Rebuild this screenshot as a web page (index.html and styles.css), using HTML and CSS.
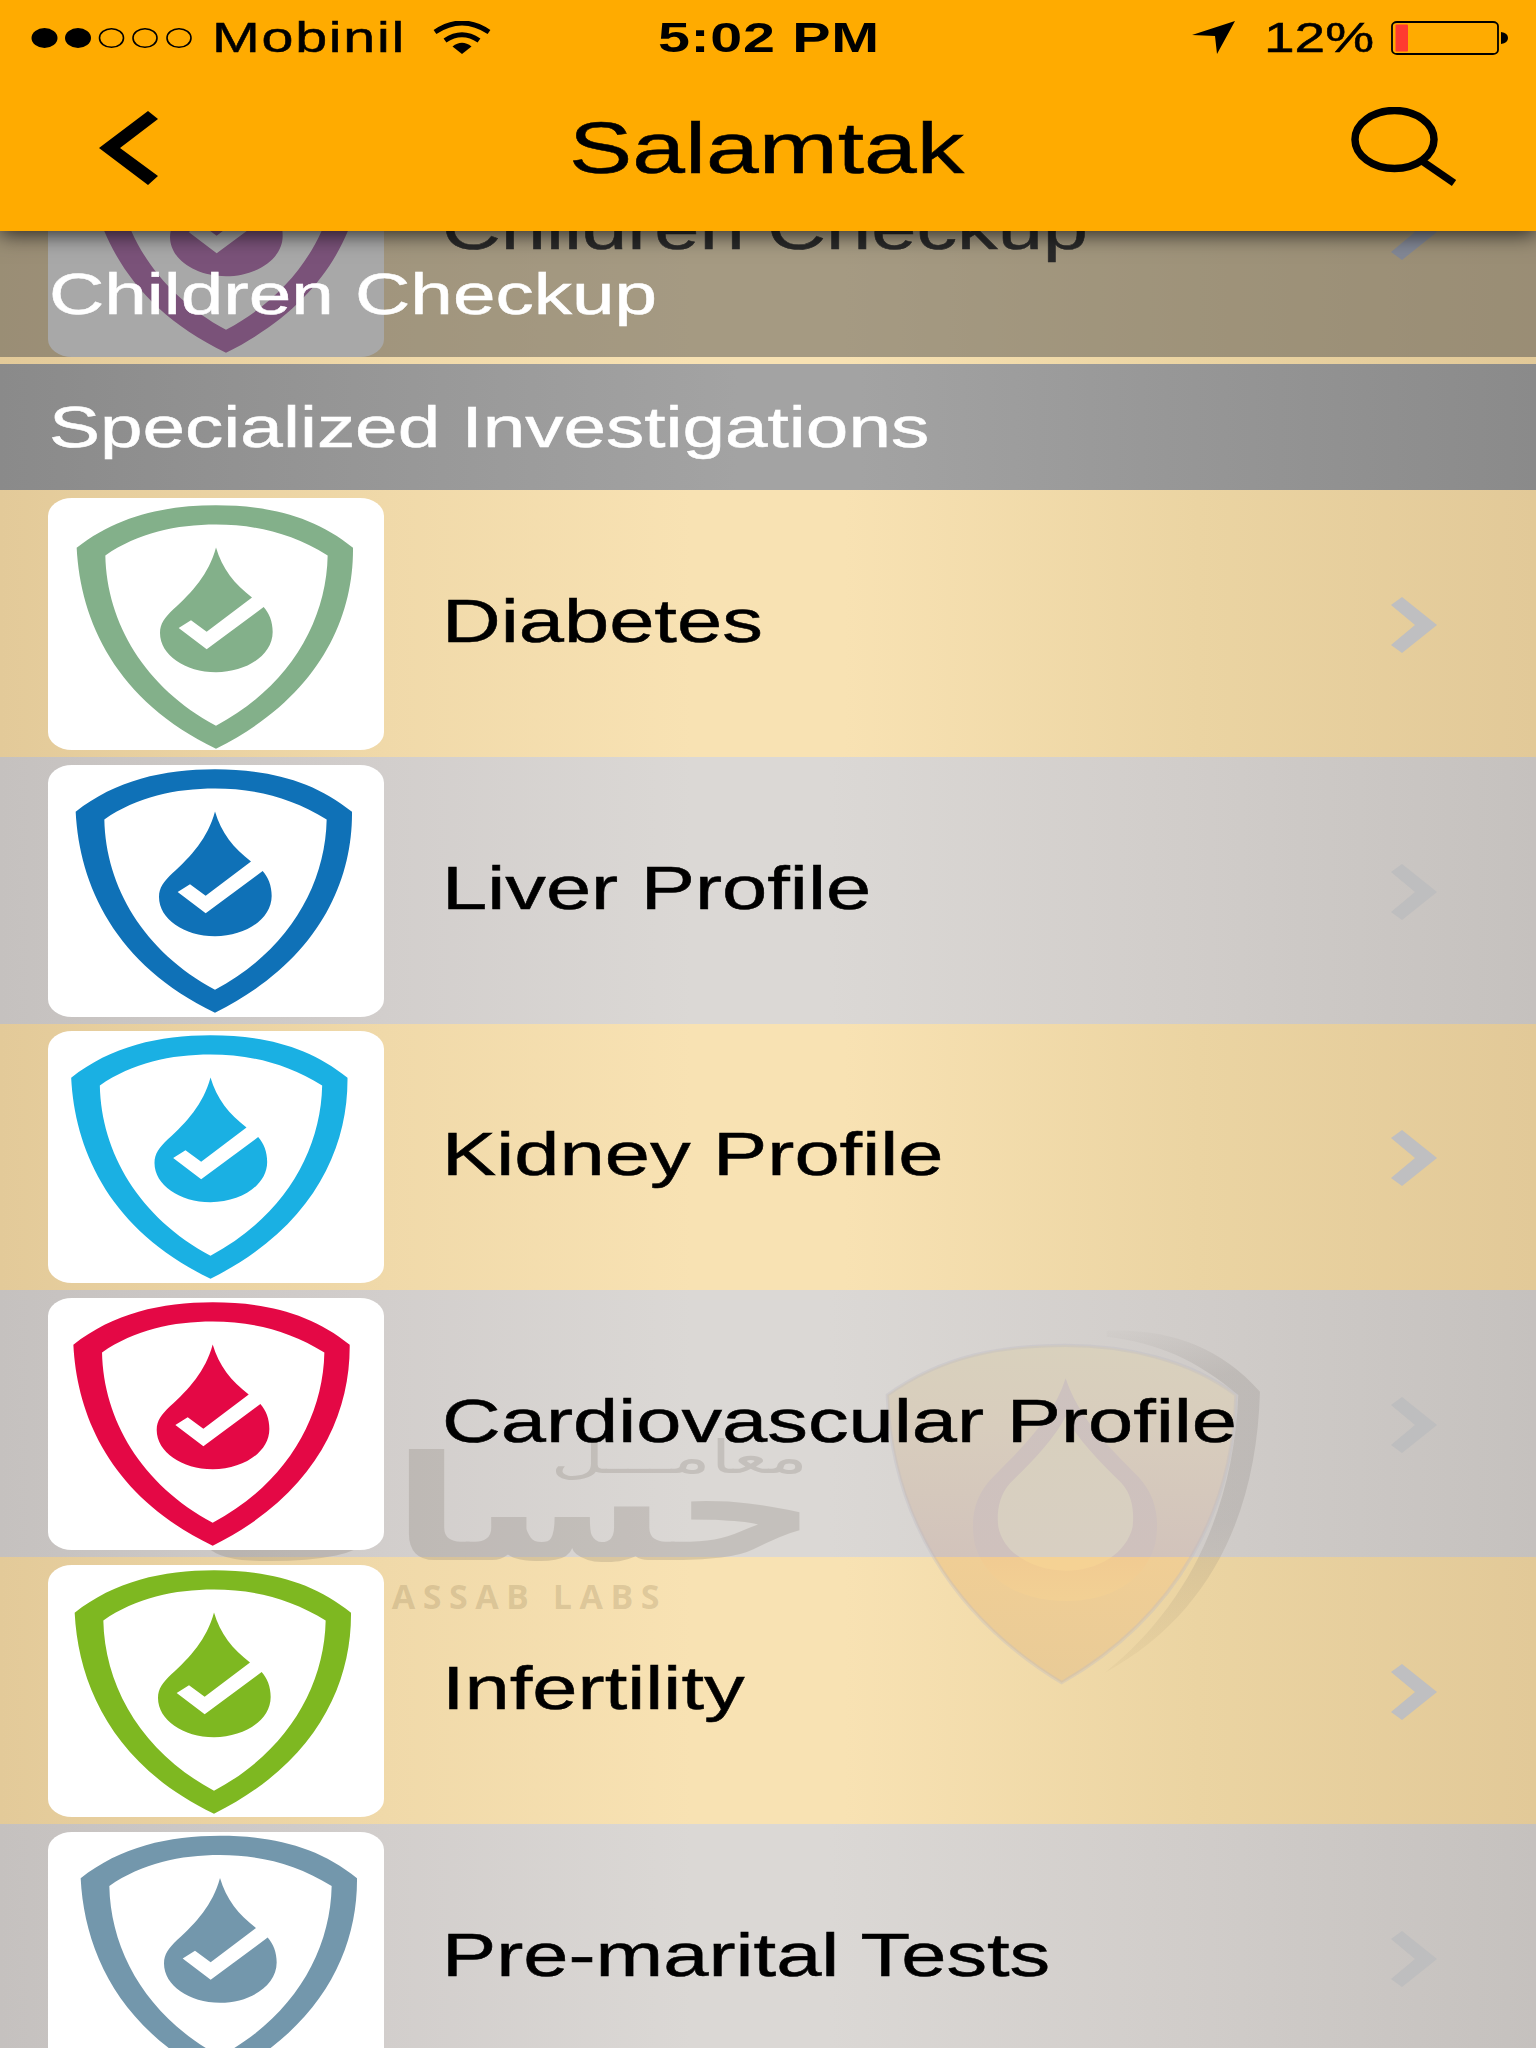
FILE: index.html
```
<!DOCTYPE html>
<html lang="en">
<head>
    <meta charset="UTF-8">
    <meta name="viewport" content="width=device-width, initial-scale=1.0">
    <title>Salamtak</title>
    <link rel="stylesheet" href="styles.css">
</head>
<body>

    <!-- shared icons -->
    <svg class="defs" width="0" height="0">
        <symbol id="shield" viewBox="0 0 1008 758" preserveAspectRatio="none">
            <path fill-rule="evenodd" d="M86 150 C205 55 350 22 504 22 C660 22 800 55 915 150 C917 370 805 605 504 754 C203 610 97 370 86 150 Z M172 173 C176 375 290 570 504 685 C720 570 835 375 839 173 C730 105 620 80 504 80 C385 80 270 105 172 173 Z"/>
            <path d="M504 149 C482 230 432 284 376 335 C350 360 336 378 336 406 C336 472 411 524 504 524 C596 524 674 472 674 403 C674 372 664 348 647 328 L476 455 L392 391 L429 368 L476 402 L612 299 C560 260 522 212 504 149 Z"/>
        </symbol>
        <symbol id="chevron" viewBox="0 0 46 56">
            <path d="M0 8 L11 0 L46 28 L11 56 L0 48 L24 28 Z"/>
        </symbol>
    </svg>

    <header class="topbar">
        <div class="status">
            <div class="status-left">
                <svg class="signal" width="162" height="22" viewBox="0 0 162 22">
                    <ellipse cx="13.5" cy="11" rx="13" ry="10"/>
                    <ellipse cx="47" cy="11" rx="13" ry="10"/>
                    <ellipse class="empty" cx="80.500" cy="11" rx="12" ry="9.300"/>
                    <ellipse class="empty" cx="114" cy="11" rx="12" ry="9.300"/>
                    <ellipse class="empty" cx="148" cy="11" rx="12" ry="9.300"/>
                </svg>
                <span class="carrier"><span class="wide">Mobinil</span></span>
                <svg class="wifi" width="58" height="34" viewBox="0 0 58 34">
                    <path class="arc" d="M2 11 Q29 -7 56 11"/>
                    <path class="arc" d="M12 19.500 Q29 8 46 19.500"/>
                    <path d="M19.500 25.500 Q29 18 38.500 25.500 L29 33 Z"/>
                </svg>
            </div>
            <div class="clock"><span class="wide">5:02 PM</span></div>
            <div class="status-right">
                <svg width="43" height="33" viewBox="0 0 43 33"><path d="M43 0 L25 33 L23 15 L0 14 Z"/></svg>
                <span class="percent"><span class="wide">12%</span></span>
                <svg class="battery" width="118" height="34" viewBox="0 0 118 34">
                    <rect class="case" x="1" y="1" width="106" height="32" rx="5" ry="4"/>
                    <rect class="level" x="4.500" y="3.500" width="12.500" height="27" rx="1"/>
                    <path d="M110 11 Q117 12 117 17 Q117 22 110 23 Z"/>
                </svg>
            </div>
        </div>
        <div class="navbar">
            <svg class="back" width="59" height="74" viewBox="0 0 59 74"><path d="M49 0 L59 8 L21 37 L59 65 L49 74 L0 37 Z"/></svg>
            <h1><span class="wide">Salamtak</span></h1>
            <svg class="search" width="106" height="80" viewBox="0 0 106 80">
                <ellipse cx="43.500" cy="32.500" rx="39.500" ry="29"/>
                <path d="M71 54 L103 76"/>
            </svg>
        </div>
    </header>

    <main class="list">
        <svg class="watermark" viewBox="0 231 1536 1817">
            <defs>
                <linearGradient id="gold" gradientUnits="userSpaceOnUse" x1="0" y1="130" x2="0" y2="1148">
                    <stop offset="0" stop-color="#d9d1bd"/>
                    <stop offset="0.250" stop-color="#d8cdbd"/>
                    <stop offset="0.629" stop-color="#d2c3bb"/>
                    <stop offset="0.630" stop-color="#f0ce95"/>
                    <stop offset="1" stop-color="#e9cb97"/>
                </linearGradient>
                <linearGradient id="inner" gradientUnits="userSpaceOnUse" x1="0" y1="300" x2="0" y2="820">
                    <stop offset="0" stop-color="#d8d0bd"/>
                    <stop offset="0.904" stop-color="#d8cfc2"/>
                    <stop offset="0.905" stop-color="#f5d294"/>
                </linearGradient>
                <linearGradient id="ring" gradientUnits="userSpaceOnUse" x1="0" y1="235" x2="0" y2="900">
                    <stop offset="0" stop-color="#cdc2bf"/>
                    <stop offset="0.805" stop-color="#cfc1bd"/>
                    <stop offset="0.806" stop-color="#f1cb92"/>
                    <stop offset="1" stop-color="#f2d094"/>
                </linearGradient>
                <linearGradient id="swoosh" gradientUnits="userSpaceOnUse" x1="740" y1="90" x2="900" y2="1115">
                    <stop offset="0" stop-color="#8a8480" stop-opacity="0.020"/>
                    <stop offset="0.180" stop-color="#8a8480" stop-opacity="0.240"/>
                    <stop offset="0.600" stop-color="#8a8480" stop-opacity="0.240"/>
                    <stop offset="1" stop-color="#a08a60" stop-opacity="0.060"/>
                </linearGradient>
            </defs>
            <g class="brand">
                <text class="brand-small" transform="translate(808 1473) scale(1.600 1)">معامـــل</text>
                <text class="brand-big" transform="translate(818 1560) scale(1.380 1)">حساب</text>
            </g>
            <text class="brand-latin" x="667" y="1609">HASSAB LABS</text>
            <g transform="translate(860 1300) scale(0.3333)">
                <path class="rim" fill="url(#gold)" d="M82 285 C250 165 430 136 615 136 C800 136 990 180 1128 285 C1120 620 960 945 605 1148 C270 945 95 640 82 285 Z"/>
                <path fill="url(#swoosh)" d="M740 92 C930 85 1080 140 1200 275 C1190 630 1060 940 735 1118 C970 930 1120 650 1135 285 C1010 180 900 130 740 110 Z"/>
                <path fill="url(#ring)" d="M617 235 C580 350 500 430 400 530 C340 590 330 660 345 735 C380 850 490 903 617 903 C744 903 850 850 885 735 C900 660 890 590 835 530 C735 430 655 350 617 235 Z"/>
                <path fill="url(#inner)" d="M617 350 C580 420 520 480 450 550 C415 590 410 640 415 680 C430 760 520 812 617 812 C714 812 800 760 818 680 C822 640 820 590 785 550 C715 480 655 420 617 350 Z"/>
            </g>
        </svg>

        <div class="row row-tan row-under">
            <div class="thumb"><svg class="icon children"><use href="#shield"/></svg></div>
            <div class="label"><span class="wide">Children Checkup</span></div>
            <svg class="chevron"><use href="#chevron"/></svg>
        </div>
        <h2 class="section section-pinned"><span class="wide">Children Checkup</span></h2>

        <h2 class="section"><span class="wide">Specialized Investigations</span></h2>
        <div class="row row-tan">
            <div class="thumb"><svg class="icon diabetes"><use href="#shield"/></svg></div>
            <div class="label"><span class="wide">Diabetes</span></div>
            <svg class="chevron"><use href="#chevron"/></svg>
        </div>
        <div class="row row-gray">
            <div class="thumb"><svg class="icon liver"><use href="#shield"/></svg></div>
            <div class="label"><span class="wide">Liver Profile</span></div>
            <svg class="chevron"><use href="#chevron"/></svg>
        </div>
        <div class="row row-tan">
            <div class="thumb"><svg class="icon kidney"><use href="#shield"/></svg></div>
            <div class="label"><span class="wide">Kidney Profile</span></div>
            <svg class="chevron"><use href="#chevron"/></svg>
        </div>
        <div class="row row-gray">
            <div class="thumb"><svg class="icon cardio"><use href="#shield"/></svg></div>
            <div class="label"><span class="wide">Cardiovascular Profile</span></div>
            <svg class="chevron"><use href="#chevron"/></svg>
        </div>
        <div class="row row-tan">
            <div class="thumb"><svg class="icon infertility"><use href="#shield"/></svg></div>
            <div class="label"><span class="wide">Infertility</span></div>
            <svg class="chevron"><use href="#chevron"/></svg>
        </div>
        <div class="row row-gray">
            <div class="thumb"><svg class="icon marital"><use href="#shield"/></svg></div>
            <div class="label"><span class="wide">Pre-marital Tests</span></div>
            <svg class="chevron"><use href="#chevron"/></svg>
        </div>
    </main>

</body>
</html>
```
FILE: styles.css
```
* {
    box-sizing: border-box;
}

body {
    margin: 0;
    width: 1536px;
    height: 2048px;
    overflow: hidden;
    display: flex;
    flex-direction: column;
    font-family: "Liberation Sans", Arial, sans-serif;
    color: #000;
}

svg {
    display: block;
    flex: none;
}

.defs {
    position: absolute;
}

/* every label is set in wide letters */
.wide {
    display: inline-block;
    white-space: nowrap;
    transform: scaleX(1.326);
    transform-origin: left center;
    -webkit-text-stroke: 0.5px currentColor;
}

/* top bar */
.topbar {
    position: relative;
    z-index: 3;
    flex: none;
    height: 231px;
    background: #ffab00;
    box-shadow: 0 3px 20px rgba(0, 0, 0, 0.75);
}

.status {
    height: 72px;
    padding: 3px 27px 0 31px;
    display: grid;
    grid-template-columns: 627px 1fr 317px;
    align-items: center;
    font-size: 43.3px;
}

.status-left,
.status-right {
    display: flex;
    align-items: center;
}

.signal .empty {
    fill: none;
    stroke: #000;
    stroke-width: 1.6;
}

.carrier {
    width: 197px;
    margin-left: 19px;
    letter-spacing: 1.3px;
}

.wifi {
    margin-left: 24px;
}

.wifi .arc {
    fill: none;
    stroke: #000;
    stroke-width: 5;
}

.clock {
    font-weight: bold;
}

.clock .wide {
    letter-spacing: 0.5px;
    -webkit-text-stroke: 0;
}

.status-right {
    padding-left: 0;
}

.percent {
    width: 108px;
    margin: 0 19px 0 29px;
}

.percent .wide {
    transform: scaleX(1.27);
}

.battery .case {
    fill: none;
    stroke: #000;
    stroke-width: 1.8;
}

.battery .level {
    fill: #ff3b30;
}

.navbar {
    height: 159px;
    padding: 0 78px 7px 99px;
    display: flex;
    align-items: center;
}

.navbar h1 {
    margin: 0 0 0 411px;
    width: 782px;
    font-size: 72.1px;
    font-weight: normal;
}

.navbar .wide {
    transform: scaleX(1.315);
}

.search {
    margin-top: -3px;
    fill: none;
    stroke: #000;
    stroke-width: 7.5;
}

/* list */
.list {
    position: relative;
    flex: 1;
    overflow: hidden;
}

.watermark {
    position: absolute;
    left: 0;
    top: 0;
    z-index: 1;
    width: 1536px;
    height: 1817px;
}

.brand {
    fill: #6e645a;
    opacity: 0.2;
}

.brand-small,
.brand-big {
    font-family: "DejaVu Sans", sans-serif;
    direction: rtl;
}

.brand-small {
    font-size: 46px;
}

.brand-big {
    font-size: 146px;
    font-weight: bold;
}

.brand-latin {
    font-family: "Open Sans", sans-serif;
    font-size: 34px;
    font-weight: 700;
    letter-spacing: 7.5px;
    text-anchor: end;
    fill: rgba(120, 100, 60, 0.2);
}

.rim {
    stroke: rgba(190, 186, 196, 0.35);
    stroke-width: 10;
}

.row {
    height: 266.8px;
    padding: 0 99px 0 48px;
    display: flex;
    align-items: center;
}

.row-tan {
    background: linear-gradient(to right, #e3ca99 0, #f0d9a9 25%, #f8e2b3 45%, #f8e2b3 55%, #ebd4a2 78%, #e2c998 100%);
}

.row-gray {
    background: linear-gradient(to right, #c5c1bf 0, #d2cecc 25%, #dbd8d5 45%, #dbd8d5 54%, #d2cecb 75%, #c5c1be 100%);
}

.row-under {
    margin-top: -134px;
}

.thumb {
    position: relative;
    z-index: 2;
    flex: none;
    width: 336px;
    height: 252px;
    margin-top: 1px;
    overflow: hidden;
    background: #fff;
    border-radius: 24px / 18px;
}

.icon {
    width: 336px;
    height: 252px;
}

.label {
    position: relative;
    z-index: 2;
    flex: 1;
    padding: 0 0 5px 58px;
    font-size: 61.3px;
}

.chevron {
    position: relative;
    z-index: 2;
    width: 46px;
    height: 56px;
    margin-top: 3px;
    fill: #bfbfc1;
}

.row-gray .chevron {
    fill: #bebebf;
}

.row-under .chevron {
    fill: #b3bdd8;
}

.section {
    margin: 0;
    height: 126.2px;
    padding-left: 49px;
    display: flex;
    align-items: center;
    font-size: 57.7px;
    font-weight: normal;
    color: #fff;
    background: linear-gradient(to right, #8a8a8a 0, #979797 25%, #a3a3a3 48%, #a3a3a3 56%, #979797 76%, #8a8a8a 100%);
}

/* sticks under the top bar, over the scrolled row */
.section-pinned {
    position: absolute;
    left: 0;
    right: 0;
    top: 0;
    z-index: 2;
    background: rgba(81, 81, 81, 0.5);
}

/* icon colours, the artwork sits a little differently in each */
.children {
    fill: #a353a0;
    transform: translate(10px, -3px);
}

.diabetes {
    fill: #83b08a;
}

.liver {
    fill: #0f71b7;
    transform: translate(-1px, -3px);
}

.kidney {
    fill: #1ab0e3;
    transform: translate(-5.5px, -3px);
}

.cardio {
    fill: #e40845;
    transform: translate(-3.3px, -3px);
}

.infertility {
    fill: #7eb821;
    transform: translate(-2px, -2px);
}

.marital {
    fill: #7397ac;
    transform: translate(4px, -3.5px);
}
```
